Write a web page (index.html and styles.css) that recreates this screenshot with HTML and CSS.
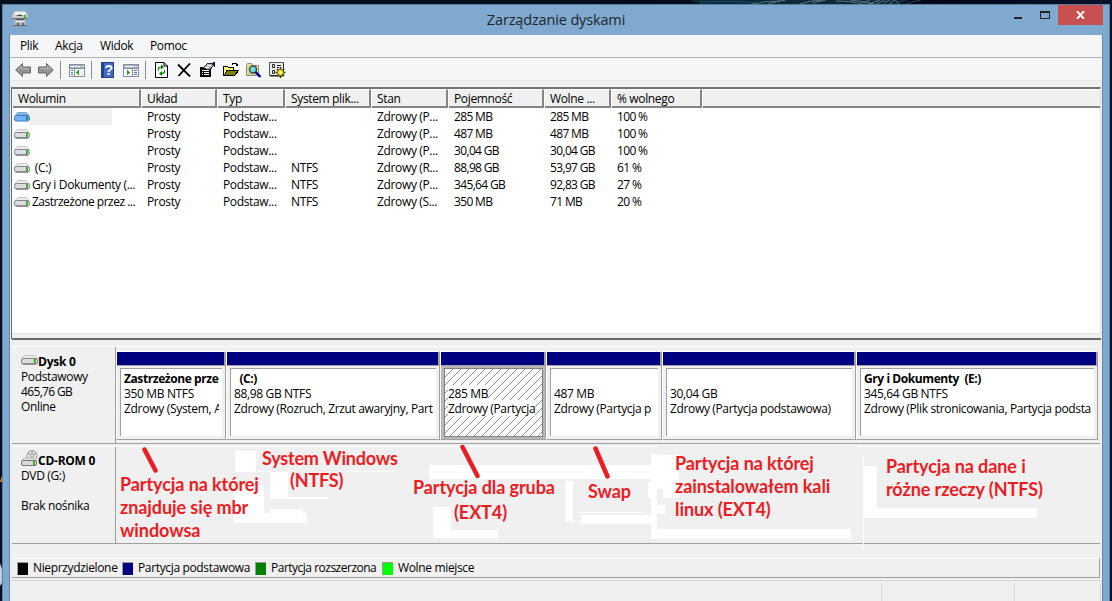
FILE: index.html
```html
<!DOCTYPE html>
<html lang="pl">
  <head>
    <meta charset="UTF-8" />
    <meta name="viewport" content="width=device-width, initial-scale=1.0" />
    <title>Zarządzanie dyskami</title>
    <link rel="stylesheet" href="styles.css">
  </head>
  <body>
    <!-- shared drive icons -->
    <svg class="defs" width="0" height="0">
      <defs>
        <symbol id="drive" viewBox="0 0 16 10">
          <path d="M3.500 .5h9l2.500 3H1z" fill="#ececec" stroke="#bdbdbd" stroke-width=".8" />
          <rect x=".5" y="3.500" width="15" height="5.500" rx="2" fill="#dcdce2" stroke="#85858a" />
          <path d="M2 9h12" stroke="#68686b" />
          <rect x="12" y="4" width="2" height="4" fill="#35b51c" />
        </symbol>
        <symbol id="drive-blue" viewBox="0 0 16 10">
          <path d="M3.500 .5h9l2 2.500h-13z" fill="#8cbcf0" stroke="#5c92d0" stroke-width=".7" />
          <rect x=".5" y="3.500" width="15" height="5.500" rx="2" fill="#74b2f5" stroke="#3f78bd" />
          <rect x="12" y="4" width="2" height="4" fill="#1e8a9b" />
        </symbol>
      </defs>
    </svg>

    <svg class="wallpaper" width="1112" height="601">
      <path d="M690 0h220l-10 4H700z" fill="#0d2a3a" />
      <g fill="none" stroke="#8fa9b3" opacity=".6">
        <path d="M752 4q14-3 28-3M768 4q10-3 18-4M800 4q12-4 22-4M812 3l14-3M836 1q16 0 26 3M850 0q12 1 24 4" />
        <path d="M862 3l8-3M868 4l12-4M876 4l9-4M884 3l6-3M890 4l4-4M899 4l-4-4" />
      </g>
      <path d="M700 2q30-2 60 1M905 4q10-3 16-4" fill="none" stroke="#1c4a5c" />
      <path d="M0 482l2-6v6z" fill="#e58a2c" />
      <path d="M0 563l2 6v14l-2 3z" fill="#b9cfdb" />
    </svg>

    <div class="window">
      <div class="titlebar">
        <svg class="app-icon" width="16" height="16" viewBox="0 0 16 16">
          <path d="M3 0h10l3 4v4H0V4z" fill="#c9c9c9" />
          <path d="M3 1h10l1 3H2z" fill="#f1f1f1" />
          <path d="M4 5q4-3 7 0" fill="#444" />
          <path d="M0 7h16v1H0z" fill="#6d6d6d" />
          <rect x="12" y="4" width="2" height="3" fill="#31c51b" />
          <path d="M2 9h12v6H2z" fill="#b4b7b8" />
          <path d="M4 8h8v1H4z" fill="#5c5c5c" />
          <path d="M4 10.500h8" stroke="#eee" />
          <path d="M5 12h2v2H5zM10 12h2v2h-2zM1 14h14v1H1z" fill="#666" />
        </svg>
        <div class="title">Zarządzanie dyskami</div>
        <div class="window-buttons">
          <span class="minimize"></span>
          <span class="maximize"></span>
          <span class="close">
            <svg width="9" height="8" viewBox="0 0 9 8"><path d="M1 0l7 8M8 0L1 8" stroke="#fff" stroke-width="1.900" /></svg>
          </span>
        </div>
      </div>

      <div class="client">
        <div class="menu">
          <span class="m-plik">Plik</span>
          <span class="m-akcja">Akcja</span>
          <span class="m-widok">Widok</span>
          <span class="m-pomoc">Pomoc</span>
        </div>

        <div class="toolbar">
          <svg class="i-back" width="16" height="16" viewBox="0 0 16 16">
            <path d="M.7 8L7.500 1.500V5h8v6h-8v3.500z" fill="#949494" stroke="#686868" />
            <path d="M2.500 8L6.500 4v2.500h7.500" fill="none" stroke="#b9b9b9" />
          </svg>
          <svg class="i-forward" width="16" height="16" viewBox="0 0 16 16">
            <path d="M15.300 8L8.500 1.500V5h-8v6h8v3.500z" fill="#949494" stroke="#686868" />
            <path d="M2 6.500h7.500V4l4 4" fill="none" stroke="#b9b9b9" />
          </svg>
          <span class="separator"></span>
          <svg class="i-tree" width="16" height="16" viewBox="0 0 16 16" shape-rendering="crispEdges">
            <rect x=".5" y="2.500" width="15" height="12" fill="#fff" stroke="#87909c" />
            <path d="M1 3h14v3H1z" fill="#a4b0bf" />
            <path d="M2 4.500h9M12 4.500h1M14 4.500h1" stroke="#fff" />
            <path d="M1 6.500h14M5.500 7v7" stroke="#87909c" />
            <path d="M2 8h2v1H2zM2 10h2v1H2zM2 12h2v1H2z" fill="#4378b8" />
            <path d="M6 7h8v7H6z" fill="#f1f3f5" />
            <path d="M10 8v5L7 10.500z" fill="#2ba12b" />
          </svg>
          <span class="separator"></span>
          <svg class="i-help" width="13" height="16" viewBox="0 0 13 16">
            <rect x=".5" y=".5" width="12" height="15" fill="#426bca" stroke="#293f86" />
            <path d="M1 1h2v14H1z" fill="#263e92" />
            <text class="help-mark" x="3.500" y="13">?</text>
          </svg>
          <svg class="i-pane" width="16" height="16" viewBox="0 0 16 16" shape-rendering="crispEdges">
            <rect x=".5" y="2.500" width="15" height="12" fill="#fff" stroke="#87909c" />
            <path d="M1 3h14v3H1z" fill="#a4b0bf" />
            <path d="M2 4.500h9M12 4.500h1M14 4.500h1" stroke="#fff" />
            <path d="M1 6.500h14M9.500 7v7" stroke="#87909c" />
            <path d="M11 8h3v1h-3zM11 10h3v1h-3zM11 12h3v1h-3z" fill="#4378b8" />
            <path d="M4 8v5l3-2.500z" fill="#2ba12b" />
          </svg>
          <span class="separator"></span>
          <svg class="i-refresh" width="13" height="16" viewBox="0 0 13 16">
            <path d="M.5 .5h8.500l3.500 3.500v11.500H.5z" fill="#fff" stroke="#000" />
            <path d="M9 .5V4h3.500" fill="none" stroke="#000" />
            <path d="M3.500 8.500V7q0-2 3-2" fill="none" stroke="#008000" stroke-width="1.200" />
            <path d="M6 2.500l3 2.500-3 2.500z" fill="#008000" />
            <path d="M9.500 8v1.500q0 2-3 2" fill="none" stroke="#008000" stroke-width="1.200" />
            <path d="M7 9l-3 2.500L7 14z" fill="#008000" />
          </svg>
          <svg class="i-delete" width="15" height="14" viewBox="0 0 15 14">
            <path d="M1 1.500l12 12M13 .5L1.500 13" stroke="#000" stroke-width="1.800" />
          </svg>
          <svg class="i-props" width="16" height="16" viewBox="0 0 16 16" shape-rendering="crispEdges">
            <path d="M0 5h11v10H0z" fill="#000" />
            <path d="M2 8.500h7M2 10.500h1M4 10.500h5M2 12.500h1M4 12.500h5" stroke="#fff" />
            <path d="M3.500 5.500l4-4h5l1 2-3 3.500H6z" fill="#b0b0b0" stroke="#222" />
            <path d="M5 5.500h4M7 3.500h4" stroke="#fff" />
            <path d="M13 0h2v5h-1V2h-1z" fill="#000090" />
          </svg>
          <svg class="i-open" width="17" height="16" viewBox="0 0 17 16" shape-rendering="crispEdges">
            <path d="M.5 13V4.500h4l1 1h5V8" fill="#ffff70" stroke="#000" />
            <path d="M1 13.500L4 8.500h11.500l-4 5z" fill="#808000" stroke="#000" />
            <path d="M9 2.500q2-3 5 0" fill="none" stroke="#000" />
            <path d="M15 1v3h-3z" fill="#000" />
          </svg>
          <svg class="i-search" width="16" height="16" viewBox="0 0 16 16">
            <path d="M.5 13.500v-10l1-2h4l1 2h6v10z" fill="#e3df86" stroke="#8a8a8a" />
            <path d="M2 12h9" stroke="#b5b48a" stroke-dasharray="1 1" />
            <circle cx="7" cy="7.500" r="3.500" fill="#62e2e6" stroke="#444" stroke-width="1.400" />
            <path d="M9.500 10l5 5" stroke="#0000a0" stroke-width="2.400" />
          </svg>
          <svg class="i-settings" width="17" height="16" viewBox="0 0 17 16">
            <path d="M.5 .5h14v13H.5z" fill="#ececec" stroke="#555" />
            <path d="M1 13h13v1.500H1zM14 1h1v13h-1z" fill="#222" />
            <path d="M3.500 2.500h2v3h-2zM3.500 8.500h2v3h-2z" fill="#fff" stroke="#222" />
            <path d="M8 3.500h4M8 5.500h2" stroke="#222" />
            <path d="M11.500 5v11M6.500 10.500h10M8 7l7 7M15 7l-7 7" stroke="#383800" stroke-width="1.600" />
            <circle cx="11.500" cy="10.500" r="3" fill="#f6e92b" stroke="#777000" />
            <circle cx="11.500" cy="10.500" r="1" fill="#fff" />
          </svg>
        </div>

        <div class="volumes">
          <div class="row head">
            <span>Wolumin</span><span>Układ</span><span>Typ</span><span>System plik...</span><span>Stan</span><span>Pojemność</span><span>Wolne ...</span><span>% wolnego</span><span></span>
          </div>
          <div class="row">
            <span class="name selected"><svg width="16" height="10"><use href="#drive-blue" /></svg><i></i></span><span>Prosty</span><span>Podstaw...</span><span></span><span>Zdrowy (P...</span><span class="num">285 MB</span><span class="num">285 MB</span><span class="num">100 %</span>
          </div>
          <div class="row">
            <span class="name"><svg width="16" height="10"><use href="#drive" /></svg></span><span>Prosty</span><span>Podstaw...</span><span></span><span>Zdrowy (P...</span><span class="num">487 MB</span><span class="num">487 MB</span><span class="num">100 %</span>
          </div>
          <div class="row">
            <span class="name"><svg width="16" height="10"><use href="#drive" /></svg></span><span>Prosty</span><span>Podstaw...</span><span></span><span>Zdrowy (P...</span><span class="num">30,04 GB</span><span class="num">30,04 GB</span><span class="num">100 %</span>
          </div>
          <div class="row">
            <span class="name"><svg width="16" height="10"><use href="#drive" /></svg>&nbsp;(C:)</span><span>Prosty</span><span>Podstaw...</span><span>NTFS</span><span>Zdrowy (R...</span><span class="num">88,98 GB</span><span class="num">53,97 GB</span><span class="num">61 %</span>
          </div>
          <div class="row">
            <span class="name"><svg width="16" height="10"><use href="#drive" /></svg>Gry i Dokumenty (...</span><span>Prosty</span><span>Podstaw...</span><span>NTFS</span><span>Zdrowy (P...</span><span class="num">345,64 GB</span><span class="num">92,83 GB</span><span class="num">27 %</span>
          </div>
          <div class="row">
            <span class="name long"><svg width="16" height="10"><use href="#drive" /></svg>Zastrzeżone przez ...</span><span>Prosty</span><span>Podstaw...</span><span>NTFS</span><span>Zdrowy (S...</span><span class="num">350 MB</span><span class="num">71 MB</span><span class="num">20 %</span>
          </div>
        </div>

        <div class="splitter"></div>

        <div class="disks">
          <div class="disk">
            <div class="disk-info">
              <b><svg width="17" height="10" viewBox="0 0 16 10" preserveAspectRatio="none"><use href="#drive" /></svg>Dysk 0</b>
              <p>Podstawowy</p>
              <p class="num">465,76 GB</p>
              <p>Online</p>
            </div>
            <div class="partitions">
              <div class="partition p1">
                <div class="bar"></div>
                <div class="box"><div class="label"><b>Zastrzeżone prze</b><p>350 MB NTFS</p><p>Zdrowy (System, A</p></div></div>
              </div>
              <div class="partition p2">
                <div class="bar"></div>
                <div class="box"><div class="label"><b>&nbsp; (C:)</b><p>88,98 GB NTFS</p><p>Zdrowy (Rozruch, Zrzut awaryjny, Part</p></div></div>
              </div>
              <div class="partition p3 active">
                <div class="bar"></div>
                <div class="box"><div class="label"><b>&nbsp;</b><p><span>285 MB</span></p><p><span>Zdrowy (Partycja</span></p></div></div>
              </div>
              <div class="partition p4">
                <div class="bar"></div>
                <div class="box"><div class="label"><b>&nbsp;</b><p>487 MB</p><p>Zdrowy (Partycja p</p></div></div>
              </div>
              <div class="partition p5">
                <div class="bar"></div>
                <div class="box"><div class="label"><b>&nbsp;</b><p>30,04 GB</p><p>Zdrowy (Partycja podstawowa)</p></div></div>
              </div>
              <div class="partition p6">
                <div class="bar"></div>
                <div class="box"><div class="label"><b>Gry i Dokumenty &nbsp;(E:)</b><p>345,64 GB NTFS</p><p>Zdrowy (Plik stronicowania, Partycja podsta</p></div></div>
              </div>
            </div>
          </div>

          <div class="disk cdrom">
            <div class="disk-info">
              <b><svg width="17" height="17" viewBox="0 0 17 17">
                <circle cx="11" cy="5.500" r="5" fill="#dfe3e6" stroke="#999" />
                <path d="M11 1v3M7 3l3 2M15 3l-3 2" stroke="#7fae85" />
                <circle cx="11" cy="5.500" r="1.500" fill="#fff" stroke="#777" stroke-width=".7" />
                <path d="M3 8h11l2 3H1z" fill="#ddd" stroke="#aaa" stroke-width=".7" />
                <rect x=".5" y="10.500" width="15" height="5" rx="1.500" fill="#d9d9dd" stroke="#77777b" />
                <rect x="12" y="11" width="2" height="4" fill="#35b51c" />
              </svg>CD-ROM 0</b>
              <p>DVD (G:)</p>
              <p>&nbsp;</p>
              <p>Brak nośnika</p>
            </div>
            <div class="empty"></div>
          </div>
        </div>

        <div class="legend">
          <span class="l1"><i class="black"></i>Nieprzydzielone</span>
          <span class="l2"><i class="navy"></i>Partycja podstawowa</span>
          <span class="l3"><i class="green"></i>Partycja rozszerzona</span>
          <span class="l4"><i class="lime"></i>Wolne miejsce</span>
        </div>

        <div class="statusbar"><span></span><span></span><span></span></div>
      </div>
    </div>

    <!-- hand-made notes drawn over the window -->
    <div class="notes">
      <svg width="1112" height="601" viewBox="0 0 1112 601">
        <g fill="#fff" shape-rendering="crispEdges">
          <path d="M235 451h21v21h-21zM256 471h14v1h-14zM270 472h18v27h-18zM346 471h48v1h-48zM288 497h40v2h-40z" />
          <path d="M234 485h30v28h-30zM270 509h33v4h-33zM234 513h73v10h-73z" />
          <path d="M429 465h222v14H429zM433 507h18v31h-18zM451 530h47v8h-47z" />
          <path d="M565 481h8v41h-8zM573 521h8v1h-8zM581 515h70v9h-70zM579 512h63v1h-63z" />
          <path d="M651 454h6v85h-6zM657 455h22v34h-22zM663 489h16v9h-16zM648 482h3v16h-3zM657 505h8v9h-8zM657 529h194v10H657z" />
          <path d="M863 457h1v92h-1zM864 466h13v42h-13zM864 508h173v10H864z" />
        </g>
        <path d="M657 446h200v1H657z" fill="#efefef" />
        <path d="M144.500 449.500l11 21M462.500 447l15 29M595.500 448.500l12 28" fill="none" stroke="#ed1c24" stroke-width="4.500" stroke-linecap="round" />
      </svg>
      <div class="note n1">Partycja na której<br>znajduje się mbr<br>windowsa</div>
      <div class="note n2">System Windows<br><span>(NTFS)</span></div>
      <div class="note n3">Partycja dla gruba<br><span>(EXT4)</span></div>
      <div class="note n4">Swap</div>
      <div class="note n5">Partycja na której<br>zainstalowałem kali<br>linux (EXT4)</div>
      <div class="note n6">Partycja na dane i<br>różne rzeczy (NTFS)</div>
    </div>
  </body>
</html>
```
FILE: styles.css
```css
* {
  box-sizing: border-box;
}
body {
  margin: 0;
  width: 1112px;
  height: 601px;
  overflow: hidden;
  position: relative;
  background: linear-gradient(to right, #03101f, #020d1c 50%, #010518 85%, #04132c);
  font-family: "Open Sans", "Noto Sans", sans-serif;
  font-size: 12px;
  letter-spacing: -0.35px;
  color: #000;
}
p {
  margin: 0;
}
.defs,
.wallpaper {
  position: absolute;
  left: 0;
  top: 0;
}

/* window frame */
.window {
  position: relative;
  margin: 0 2px;
  top: 4px;
  width: 1108px;
  height: 597px;
  background: #80a9cf;
  border: 1px solid #5b7f9f;
  border-bottom: none;
  padding: 0 6px;
}
.titlebar {
  height: 30px;
  display: flex;
}
.app-icon {
  margin: 6px 0 0 3px;
}
.title {
  flex: 1;
  padding: 4px 0 0 71px;
  text-align: center;
  font-size: 14.5px;
  line-height: 22px;
  letter-spacing: -0.15px;
  color: #20262c;
}
.window-buttons {
  display: flex;
  width: 90px;
}
.minimize {
  width: 8px;
  height: 2px;
  margin: 12px 18px 0 1px;
  background: #222;
}
.maximize {
  width: 10px;
  height: 8px;
  margin: 6px 8px 0 0;
  border: 1px solid #222;
  border-top-width: 2px;
}
.close {
  width: 45px;
  height: 20px;
  flex: none;
  background: #c75050;
  display: flex;
  align-items: center;
  justify-content: center;
}
.client {
  height: 566px;
  background: #f0f0f0;
  border: 1px solid #6488aa;
  border-top: none;
  border-bottom: none;
}

/* menu and toolbar */
.menu {
  height: 23px;
  background: #f5f6f7;
  border-bottom: 1px solid #b0b0b0;
  display: flex;
  line-height: 22px;
}
.m-plik {
  width: 45px;
  padding-left: 10px;
}
.m-akcja {
  width: 45px;
}
.m-widok {
  width: 50px;
}
.toolbar {
  height: 23px;
  background: #f5f6f7;
  border-bottom: 1px solid #e8e8e8;
  display: flex;
  align-items: flex-start;
  padding: 4px 0 0 5px;
}
.i-forward {
  margin: 0 6px 0 7px;
}
.separator {
  width: 1px;
  height: 18px;
  margin-top: -1px;
  background: #8d8d8d;
}
.i-tree {
  margin: 0 6px 0 8px;
}
.i-help {
  margin: 0 9px;
}
.i-pane {
  margin-right: 6px;
}
.i-refresh {
  margin: 0 9px;
}
.i-delete {
  margin: 1px 8px 0 0;
}
.i-props {
  margin-right: 7px;
}
.i-open {
  margin-right: 6px;
}
.i-search {
  margin-right: 7px;
}
.help-mark {
  font: bold 14px "Liberation Sans", sans-serif;
  fill: #fff;
}

/* volume list */
.volumes {
  height: 252px;
  width: 1090px;
  margin: 6px 0 0 1px;
  background: #fff;
  border: 1px solid #696969;
  border-top: 2px solid #757575;
  border-right-color: #e3e3e3;
  border-bottom: none;
}
.row {
  display: grid;
  grid-template-columns: 129px 76px 68px 86px 77px 96px 67px 91px 1fr;
  height: 17px;
  line-height: 17px;
  white-space: nowrap;
}
.row span {
  padding-left: 6px;
}
.head {
  height: 19px;
  background: #f0f0f0;
  border-bottom: 2px solid #858585;
}
.head span {
  border-right: 2px solid #858585;
  border-left: 1px solid #fff;
  border-top: 1px solid #fff;
  padding-left: 5px;
  line-height: 18px;
}
.head span:last-child {
  border-right: none;
}
.num {
  letter-spacing: -0.65px;
}
.row .name {
  padding-left: 2px;
  display: flex;
}
.row .long {
  letter-spacing: -0.5px;
}
.name svg {
  margin: 4px 2px 0 0;
}
.selected i {
  width: 82px;
  height: 17px;
  margin-left: -2px;
  background: #f0f0f0;
}
.splitter {
  height: 7px;
  margin: -6px 1px 0 2px;
  border-top: 1px solid #e3e3e3;
  border-bottom: 2px solid #696969;
  background: #f0f0f0;
}

/* graphical view */
.disks {
  margin: 6px 2px 0 2px;
  width: 1088px;
}
.disk {
  display: flex;
  height: 98px;
  border-top: 1px solid #fff;
  border-bottom: 1px solid #a0a0a0;
}
.disk-info {
  width: 104px;
  padding: 7px 0 0 9px;
  border-right: 1px solid #a0a0a0;
  line-height: 15px;
}
.disk-info b {
  display: flex;
  height: 15px;
  letter-spacing: -0.25px;
}
.disk-info b svg {
  margin-top: 1px;
}
b {
  font-weight: 700;
  letter-spacing: -0.42px;
  white-space: pre;
}
.partitions {
  display: flex;
  height: 90px;
  padding-top: 4px;
}
.partition {
  height: 89px;
  flex: none;
  border-left: 1px solid #fff;
  border-right: 1px solid #a0a0a0;
  border-top: 1px solid #fff;
  border-bottom: 1px solid #a0a0a0;
}
.bar {
  height: 14px;
  background: #000080;
  border-right: 1px solid #a0a0a0;
  border-bottom: 1px solid #a0a0a0;
}
.p1 {
  width: 110px;
}
.p2 {
  width: 214px;
}
.p3 {
  width: 106px;
}
.p4 {
  width: 116px;
}
.p5 {
  width: 194px;
}
.p6 {
  width: 242px;
}
.box {
  height: 68px;
  margin: 2px 3px 0;
  background: #fff;
  border-top: 1px solid #a0a0a0;
  border-left: 1px solid #a0a0a0;
  padding: 2px 3px 0;
}
.label {
  overflow: hidden;
  white-space: nowrap;
  line-height: 15px;
}
.label b {
  display: block;
}
.p1 p:last-child {
  letter-spacing: -0.3px;
}
.active {
  background: #b8b8b8;
}
.active .box {
  height: 69px;
  margin-right: 2px;
  border: 1px solid #808080;
  background: repeating-linear-gradient(135deg, #fff 0 5.1px, #8f8f8f 5.1px 5.657px);
}
.active .label span {
  background: #fff;
}
.cdrom {
  margin-top: 2px;
}
.cdrom .disk-info {
  padding-top: 6px;
}
.cdrom b svg {
  margin-top: -3px;
  flex: none;
}
.legend {
  display: flex;
  width: 1088px;
  height: 20px;
  margin: 14px 0 0 2px;
  border-top: 1px solid #fff;
  border-right: 1px solid #a0a0a0;
  border-bottom: 1px solid #a0a0a0;
  line-height: 18px;
  padding-left: 5px;
}
.legend span {
  display: flex;
  align-items: center;
  flex: none;
}
.legend i {
  width: 11px;
  height: 13px;
  margin-right: 5px;
  border: 1px solid #999;
  border-right: none;
  border-bottom: none;
}
.l1 {
  width: 105px;
}
.l2 {
  width: 133px;
}
.l3 {
  width: 127px;
  letter-spacing: -0.5px;
}
.black {
  background: #000;
}
.navy {
  background: #000080;
}
.green {
  background: #008000;
}
.lime {
  background: #00ff00;
}
.statusbar {
  display: flex;
  height: 23px;
  margin-top: 2px;
  border-top: 1px solid #d7d7d7;
}
.statusbar span {
  border-right: 1px solid #d7d7d7;
  margin-top: 2px;
  width: 86px;
}
.statusbar span:first-child {
  width: 872px;
}
.statusbar span:nth-child(2) {
  width: 133px;
}

/* notes */
.notes {
  position: absolute;
  left: 0;
  top: 0;
}
.note {
  position: absolute;
  color: #ed1c24;
  font: bold 18px/23px Lato, "Open Sans", sans-serif;
  letter-spacing: -0.08px;
  white-space: nowrap;
}
.n1 {
  left: 120px;
  top: 473px;
}
.n2 {
  left: 262px;
  top: 447px;
  line-height: 22px;
  letter-spacing: -0.2px;
}
.n2 span {
  margin-left: 28px;
}
.n3 {
  left: 413px;
  top: 475px;
  line-height: 25px;
}
.n3 span {
  margin-left: 41px;
}
.n4 {
  left: 588px;
  top: 480px;
}
.n5 {
  left: 675px;
  top: 452px;
}
.n6 {
  left: 886px;
  top: 455px;
}
```
